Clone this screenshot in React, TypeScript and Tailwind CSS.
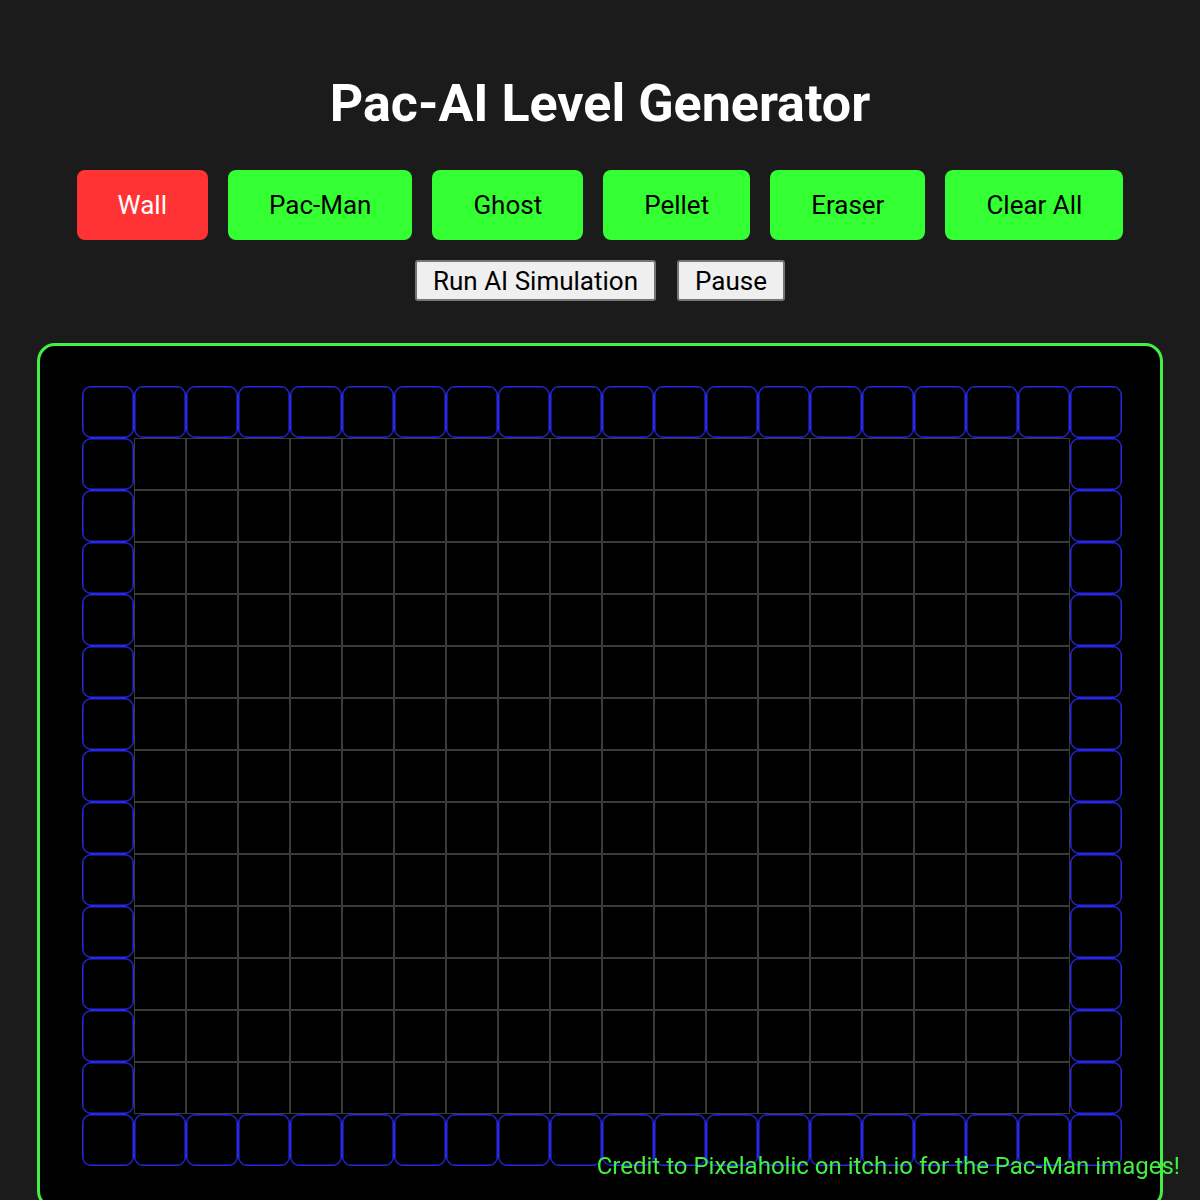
import React, { useState } from 'react';

const COLS = 20;
const ROWS = 15;

type Tool = 'wall' | 'pacman' | 'ghost' | 'pellet' | 'eraser';

// border ring of walls around an empty board
const makeBoard = () =>
  Array.from({ length: ROWS }, (_, r) =>
    Array.from({ length: COLS }, (_, c) =>
      r === 0 || r === ROWS - 1 || c === 0 || c === COLS - 1 ? 'wall' : 'empty'
    )
  );

export default function App() {
  const [tool, setTool] = useState<Tool>('wall');
  const [board, setBoard] = useState(makeBoard);

  const tools: { id: Tool | 'clear'; label: string }[] = [
    { id: 'wall', label: 'Wall' },
    { id: 'pacman', label: 'Pac-Man' },
    { id: 'ghost', label: 'Ghost' },
    { id: 'pellet', label: 'Pellet' },
    { id: 'eraser', label: 'Eraser' },
    { id: 'clear', label: 'Clear All' },
  ];

  const paint = (r: number, c: number) => {
    setBoard(b =>
      b.map((row, ri) =>
        row.map((cell, ci) => (ri === r && ci === c ? (tool === 'eraser' ? 'empty' : tool) : cell))
      )
    );
  };

  return (
    <div className="min-h-[1200px] bg-[#1b1b1b] text-white font-['Roboto',sans-serif] flex flex-col items-center pt-[76px]">
      <h1 className="text-[52px] leading-[56px] font-bold">Pac-AI Level Generator</h1>

      <div className="flex gap-5 mt-[38px]">
        {tools.map(t => (
          <button
            key={t.id}
            onClick={() => (t.id === 'clear' ? setBoard(makeBoard) : setTool(t.id))}
            className={`h-[70px] px-[41px] rounded-lg text-[26px] ${
              tool === t.id ? 'bg-[#ff3333] text-white' : 'bg-[#33ff33] text-black'
            }`}
          >
            {t.label}
          </button>
        ))}
      </div>

      <div className="flex gap-[21px] mt-5">
        <button className="h-[41px] px-4 bg-[#efefef] text-black text-[26px] border-2 border-[#767676] rounded-[3px] leading-none">
          Run AI Simulation
        </button>
        <button className="h-[41px] px-4 bg-[#efefef] text-black text-[26px] border-2 border-[#767676] rounded-[3px] leading-none">
          Pause
        </button>
      </div>

      <div className="mt-[42px] bg-black border-[3px] border-[#44ee44] rounded-[18px] pt-10 pb-10 pl-[42px] pr-[38px]">
        <div className="grid grid-cols-[repeat(20,52px)]">
          {board.map((row, r) =>
            row.map((cell, c) => (
              <div
                key={`${r}-${c}`}
                onClick={() => paint(r, c)}
                className={`w-[52px] h-[52px] border ${
                  cell === 'wall'
                    ? 'border-[#2828e6] rounded-[9px] shadow-[inset_0_0_0_0.5px_#2828e6]'
                    : 'border-[#3a3a3a]'
                }`}
              />
            ))
          )}
        </div>
      </div>

      <p className="fixed bottom-[16px] right-5 text-[24px] text-[#44ee44]">
        Credit to Pixelaholic on itch.io for the Pac-Man images!
      </p>
    </div>
  );
}
